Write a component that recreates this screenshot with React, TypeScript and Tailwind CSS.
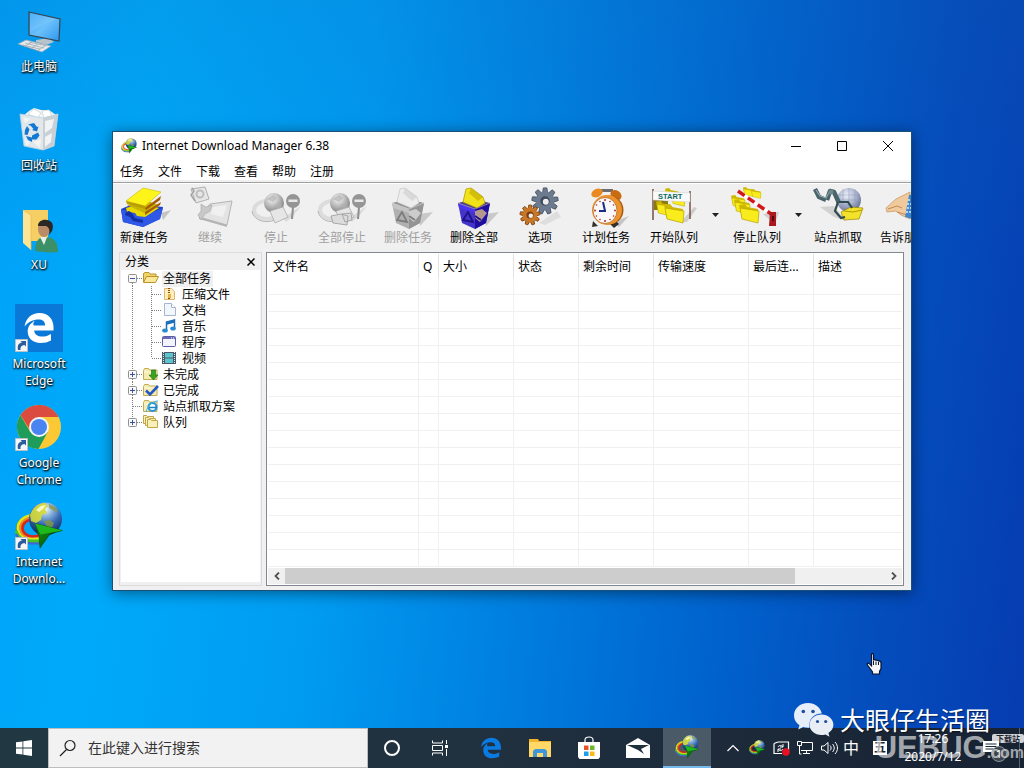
import React from "react";
import { clsx } from "clsx";

const FONT = "font-['Noto_Sans','Noto_Sans_CJK_SC',sans-serif]";

type IconProps = { className?: string };

/* ---------- logos ---------- */

function IdmLogo({ className }: IconProps) {
  return (
    <svg viewBox="0 0 48 48" className={className} aria-hidden="true">
      <defs>
        <radialGradient id="idm-globe" cx="0.5" cy="0.2" r="0.85">
          <stop offset="0" stopColor="#f4f8fb" />
          <stop offset="0.25" stopColor="#8db4dc" />
          <stop offset="0.55" stopColor="#3468b4" />
          <stop offset="1" stopColor="#0a1c48" />
        </radialGradient>
        <linearGradient id="idm-arrow" x1="0" y1="0" x2="1" y2="1">
          <stop offset="0" stopColor="#12a015" />
          <stop offset="1" stopColor="#033f06" />
        </linearGradient>
      </defs>
      <g fill="none">
        <ellipse cx="18" cy="27" rx="16.500" ry="14" stroke="#3f9f2e" strokeWidth="1.500" />
        <ellipse cx="18" cy="26" rx="15" ry="12.500" stroke="#e4e21c" strokeWidth="2.800" />
        <ellipse cx="18" cy="26" rx="12.500" ry="10.500" stroke="#f08a1c" strokeWidth="2.400" />
        <ellipse cx="18" cy="26" rx="10.500" ry="8.500" stroke="#dd2418" strokeWidth="2.600" />
        <path d="M2 30c2 5 7 7 14 7h9" stroke="#e8e31e" strokeWidth="2.500" />
        <path d="M1 29c2 7 8 10 15 10h10" stroke="#45c32a" strokeWidth="3" />
        <path d="M1 32c3 7 9 9.500 16 9.500h8" stroke="#4263dd" strokeWidth="2.200" />
      </g>
      <circle cx="30.500" cy="17" r="16.500" fill="url(#idm-globe)" />
      <path d="M15 13c3-8 9-12 15-12l3 3-3 3 2 4-5 2-1 5-5 3-5-2z" fill="#d6d936" opacity="0.9" />
      <path d="M34 2l6 3 3 5-4-1-5-3zM29 19l6-1 4 3-2 5-5-1z" fill="#8a9a3c" opacity="0.75" />
      <path d="M21 8l5-4 5-1-3 4-4 3z" fill="#fbfbd0" opacity="0.9" />
      <path d="M20 21.500L47.500 28.500 35 32 25 46 24 34z" fill="url(#idm-arrow)" stroke="#044a06" strokeWidth="0.6" />
      <path d="M20 21.500l27.500 7-22 4z" fill="#1fb81c" />
    </svg>
  );
}

function ThisPc() {
  return (
    <svg viewBox="0 0 48 48" className="size-12" aria-hidden="true">
      <defs>
        <linearGradient id="pc-screen" x1="0" y1="0" x2="1" y2="1">
          <stop offset="0" stopColor="#2c9cf0" />
          <stop offset="0.5" stopColor="#6cc0fb" />
          <stop offset="1" stopColor="#2b97ee" />
        </linearGradient>
      </defs>
      <path d="M21 33l13-2 5 4-8 3-10-3z" fill="#b7c3cb" />
      <path d="M14 5l31 7-1 22-30-6z" fill="url(#pc-screen)" stroke="#37454f" strokeWidth="1.2" />
      <path d="M15 6l25 6-25 13z" fill="#8dd0ff" opacity="0.35" />
      <path d="M3 37l8-4 25 6-9 6z" fill="#e6e9eb" stroke="#9aa5ad" strokeWidth="0.7" />
      <path d="M7 38l18 4M10 36l19 5M14 35l18 4M9 40l8-5M15 42l8-5M22 44l8-5" stroke="#9fabb3" strokeWidth="0.8" />
    </svg>
  );
}

function RecycleBin() {
  return (
    <svg viewBox="0 0 48 48" className="size-12" aria-hidden="true">
      <path d="M8 10l6-5 5-3 7 2 8 0 7 5-4 5H12z" fill="#f3f5f6" />
      <path d="M13 8l6-5 7 4-3 5zM27 5l7-1 3 6-8 2z" fill="#fff" stroke="#c5cdd2" strokeWidth="0.7" />
      <path d="M5 8l23 4 15-4-4 32-11 4-19-4z" fill="#e2e7ea" stroke="#b9d3e6" strokeWidth="0.8" />
      <path d="M28 12l15-4-4 32-11 4z" fill="#c9d0d5" />
      <path d="M30 15l9-2-2 9-7 5zM30 31l7-4-1 9-6 5zM9 33l6 3-3 4zM18 36l8-3-1 9zM8 11l8 2-6 4z" fill="#f1f3f5" />
      <g fill="#1279d3">
        <path d="M13 18.500l6-1.500 3 4 1.500-.5-1.500 5-5-1.500 1.500-1L16 20z" />
        <path d="M12 20l2.500 3.500-2 5.500-3-.5L10 24z" />
        <path d="M11 30l6 1.500v-2l6-3 1.500 3-3 4h-4.500v2.500l-4-2z" />
      </g>
    </svg>
  );
}

function UserFolder() {
  return (
    <svg viewBox="0 0 48 48" className="size-12" aria-hidden="true">
      <path d="M8 5h25v31H8z" fill="#f5cf63" />
      <path d="M8 5l8 5v35l-8-7z" fill="#ffe493" />
      <path d="M8 5l8 5v35" fill="none" stroke="#e7b94c" strokeWidth="0.7" />
      <path d="M20 46c0-8 3-14 9-14s14 1 14 15c-7 1-17 0-23-1z" fill="#3c9068" />
      <path d="M25 32l4 8 3-8z" fill="#e9efe9" />
      <ellipse cx="29" cy="24" rx="6" ry="8" fill="#b98b67" />
      <path d="M23 21c0-5 5-7 9-6 6 1 7 6 5 11l-3 4c1-5 0-8-3-9z" fill="#2b2725" />
    </svg>
  );
}

function EdgeMark({ className }: IconProps) {
  return (
    <svg viewBox="0 0 32 32" className={className} aria-hidden="true">
      <path
        fill="currentColor"
        d="M1.500 14.500C3 6 8.600 1 16.500 1 25 1 30.500 7 30.500 15v3.600H11.200c.3 4 3.600 6 8 6 3.300 0 6-.9 8.800-2.600v6.500c-3 1.700-6.500 2.500-10.300 2.500C9.600 31 4.700 26 4.700 19.500c0-4.700 2.600-8.500 7-10.600-1.300 1.500-1.900 3-.9 4.600h11.300c0-3.700-2-6-6.300-6-5.600 0-10.700 2.500-14.300 7z"
      />
    </svg>
  );
}

function EdgeTile() {
  return (
    <span className="flex size-12 items-center justify-center bg-[#0a78d7] text-white">
      <EdgeMark className="size-8" />
    </span>
  );
}

function ChromeLogo() {
  return (
    <svg viewBox="0 0 48 48" className="size-12" aria-hidden="true">
      <circle cx="24" cy="24" r="22" fill="#fcc934" />
      <path d="M5.500 12.200A22 22 0 0 0 23.500 46l9.200-17L24 24l-8.700 5z" fill="#1d9c5a" />
      <path d="M5.500 12A22 22 0 0 1 43.500 14H24l-9 13z" fill="#db4b3f" />
      <circle cx="24" cy="24" r="10" fill="#f4f5f5" />
      <circle cx="24" cy="24" r="8" fill="#4a84f0" />
    </svg>
  );
}

function ShortcutBadge() {
  return (
    <svg viewBox="0 0 13 13" className="absolute bottom-0 left-0 size-[13px]" aria-hidden="true">
      <path d="M0.500 0.500h12v12h-12z" fill="#f4f6f8" stroke="#b9c1c8" />
      <path d="M3 11c-1-5 1-7 4-7.500L5.500 2H11v5.500L9.500 6C6.500 6.500 5 8 5.500 11z" fill="#2d5c9e" />
    </svg>
  );
}

/* ---------- desktop ---------- */

const shortcuts: { lines: string[]; icon: React.ReactNode; link?: boolean }[] = [
  { lines: ["此电脑"], icon: <ThisPc /> },
  { lines: ["回收站"], icon: <RecycleBin /> },
  { lines: ["XU"], icon: <UserFolder /> },
  { lines: ["Microsoft", "Edge"], icon: <EdgeTile />, link: true },
  { lines: ["Google", "Chrome"], icon: <ChromeLogo />, link: true },
  { lines: ["Internet", "Downlo..."], icon: <IdmLogo className="size-12" />, link: true },
];

function DesktopIcons() {
  return (
    <div className="flex w-[78px] flex-col pt-[7px]">
      {shortcuts.map((s) => (
        <button key={s.lines[0]} type="button" className="flex h-[99px] flex-col items-center">
          <span className="relative block">
            {s.icon}
            {s.link && <ShortcutBadge />}
          </span>
          <span className="mt-[3px] text-center text-xs leading-[17px] text-white [text-shadow:0_1px_2px_#000,1px_1px_2px_#000]">
            {s.lines.map((l) => (
              <span key={l} className="block">
                {l}
              </span>
            ))}
          </span>
        </button>
      ))}
    </div>
  );
}

/* ---------- toolbar icons ---------- */

function AddIcon() {
  return (
    <svg viewBox="0 0 54 44" className="h-11 w-[54px]" aria-hidden="true">
      <path d="M44 27l10-3-8 10z" fill="#c4c4c4" />
      <path d="M4 23l12-5 30 3-3 12-17 8-20-5z" fill="#1f3fc8" />
      <path d="M4 23l22 7 20-8-3 11-17 8-20-5z" fill="#2f58e6" />
      <path d="M9 22l17-5 16 5-14 9-8-1-2-3-8-1z" fill="#e8d800" />
      <path d="M10 19l18-5 14 5-15 8z" fill="#c9b500" />
      <path d="M28 26l16-10-1 3-15 10zM28 22l16-12-1 4-14 10z" fill="#a55a08" />
      <path d="M9 15L26 2l18 4-16 14z" fill="#fdf51a" stroke="#c7b800" strokeWidth="0.6" />
      <path d="M9 15l19 5v3L10 18z" fill="#b99d05" />
      <path d="M9 26l3-1 3 2 3 5 8 2v3l-10-2-3-4-5-2z" fill="#1531a8" />
    </svg>
  );
}

function ResumeIcon() {
  return (
    <svg viewBox="0 0 54 44" className="h-11 w-[54px]" aria-hidden="true">
      <path d="M8 3l14-2 4 12-13 4z" fill="#e6e6e6" stroke="#b0b0b0" />
      <circle cx="17" cy="8" r="3.500" fill="none" stroke="#bdbdbd" strokeWidth="2" />
      <path d="M9 2l2 3-3 4 4 6" fill="none" stroke="#a4a4a4" strokeWidth="1.500" />
      <path d="M27 18l22-3-5 24-28-8z" fill="#e3e3e3" stroke="#b5b5b5" />
      <path d="M16 31l28 8v2l-28-8z" fill="#b4b4b4" />
      <path d="M18 18l5 3 6-2-2 6-5 3-4 6-3-5 3-4z" fill="#c8c8c8" stroke="#a6a6a6" strokeWidth="0.6" />
      <path d="M30 21l14-2-4 12-12-3z" fill="#f0f0f0" />
    </svg>
  );
}

function StopIcon({ many }: { many?: boolean }) {
  return (
    <svg viewBox="0 0 54 44" className="h-11 w-[54px]" aria-hidden="true">
      <defs>
        <radialGradient id="stop-globe" cx="0.4" cy="0.3" r="0.7">
          <stop offset="0" stopColor="#f6f6f6" />
          <stop offset="0.5" stopColor="#bdbdbd" />
          <stop offset="1" stopColor="#808080" />
        </radialGradient>
      </defs>
      <path d="M34 32l18-12-8 10-7 6z" fill="#dadada" />
      <ellipse cx="18" cy="24" rx="13" ry="9" fill="none" stroke="#dcdcdc" strokeWidth="4" />
      <path d="M3 25c2 11 16 13 25 8" fill="none" stroke="#b2b2b2" strokeWidth="1" />
      <circle cx="25" cy="17" r="10" fill="url(#stop-globe)" />
      <path d="M18 13l6-4 4 3-4 4zM26 19l6-3 1 5-5 3z" fill="#b0b0b0" opacity="0.7" />
      <path d="M21 25l13-4 5 10-13 6z" fill="#e6e6e6" stroke="#a9a9a9" strokeWidth="0.8" />
      {many && <path d="M16 30l10-2 7 2-1 9-14-2zM27 28l9-1 1 7-7 2z" fill="#dcdcdc" stroke="#999" strokeWidth="0.8" />}
      <path d="M43 21h2l-1 12h-2z" fill="#8e8e8e" />
      <circle cx="44" cy="15" r="7" fill="#959595" />
      <path d="M39.500 13.500h9v2.500h-9z" fill="#e8e8e8" />
    </svg>
  );
}

function BinIcon({ full }: { full?: boolean }) {
  const c = full
    ? { paper: "#f1e21a", shade: "#b9a000", a: "#4534c8", b: "#1f0fa0", c: "#4a35f0", mark: "#d9b98a", dark: "#1c1186" }
    : { paper: "#ededed", shade: "#c9c9c9", a: "#b0b0b0", b: "#949494", c: "#c4c4c4", mark: "#d9d9d9", dark: "#7c7c7c" };
  return (
    <svg viewBox="0 0 54 44" className="h-11 w-[54px]" aria-hidden="true">
      <path d="M38 28l14-2-13 14z" fill="#c9c9c9" />
      <path d="M11 17l16-4 16 4-15 7z" fill={c.dark} opacity="0.8" />
      <path d="M19 3l5-1 12 9 2 6-8 5-14-6z" fill={c.paper} stroke={c.shade} strokeWidth="0.8" />
      <path d="M24 2l12 9-5 4-9-8z" fill={c.shade} opacity="0.55" />
      <path d="M11 17l17 6 15-6-4 20-11 6-13-6z" fill={c.a} />
      <path d="M28 23l15-6-4 20-11 6z" fill={c.b} />
      <path d="M11 17l17 6v4l-16-5z" fill={c.c} />
      <path d="M28 25l7-2 5 4-7 9-5-4z" fill={c.mark} opacity="0.8" />
      <path d="M21 26l-5 8 10 2zM28 30l6 4" fill="none" stroke={c.dark} strokeWidth="1.800" />
      <path d="M11 17l17 6 15-6" fill="none" stroke={c.mark} strokeWidth="0.7" opacity="0.8" />
    </svg>
  );
}

function Gear({ cx, cy, r, fill, edge }: { cx: number; cy: number; r: number; fill: string; edge: string }) {
  return (
    <g transform={`translate(${cx} ${cy})`}>
      {[0, 40, 80, 120, 160, 200, 240, 280, 320].map((a) => (
        <path
          key={a}
          transform={`rotate(${a})`}
          d={`M${-r * 0.24} ${-r * 0.7}L${-r * 0.16} ${-r * 1.25}H${r * 0.18}L${r * 0.26} ${-r * 0.7}z`}
          fill={fill}
          stroke={edge}
          strokeWidth="0.8"
        />
      ))}
      <circle r={r * 0.9} fill={fill} />
      <circle r={r * 0.45} fill={edge} />
      <circle cx="0.8" cy="0.8" r={r * 0.28} fill="#eee" />
    </g>
  );
}

function OptionsIcon() {
  return (
    <svg viewBox="0 0 54 44" className="h-11 w-[54px]" aria-hidden="true">
      <path d="M26 37l18-12 4 6-16 8z" fill="#dedede" />
      <Gear cx={32} cy={15} r={10.5} fill="#6c7b8f" edge="#3f4c5c" />
      <Gear cx={17} cy={29} r={8} fill="#c97828" edge="#7a3d0c" />
    </svg>
  );
}

function SchedulerIcon() {
  return (
    <svg viewBox="0 0 54 44" className="h-11 w-[54px]" aria-hidden="true">
      <path d="M34 36l16-6-10 11z" fill="#c6c6c6" />
      <path d="M14 35l5 5-6 1zM36 34l4 4-5 4-4-4z" fill="#33302c" />
      <path d="M20 3h14v3H20z" fill="#6d6d70" />
      <ellipse cx="18" cy="7" rx="6" ry="4" fill="#e98a20" transform="rotate(-25 18 7)" />
      <ellipse cx="37" cy="9" rx="6" ry="4.500" fill="#c96b12" transform="rotate(35 37 9)" />
      <circle cx="30" cy="24" r="14.500" fill="#a8570f" />
      <circle cx="28" cy="24" r="15" fill="#ec932d" />
      <ellipse cx="26" cy="24.500" rx="12" ry="13" fill="#f8f8fb" stroke="#b76a1c" strokeWidth="0.8" />
      <g fill="#b03020">
        <circle cx="26" cy="14" r="1" />
        <circle cx="26" cy="35" r="1" />
        <circle cx="16" cy="24.500" r="1" />
        <circle cx="36" cy="24.500" r="1" />
        <circle cx="31" cy="15.500" r="0.800" />
        <circle cx="34.500" cy="19" r="0.800" />
        <circle cx="34.500" cy="30" r="0.800" />
        <circle cx="31" cy="33.500" r="0.800" />
        <circle cx="21" cy="33.500" r="0.800" />
        <circle cx="17.500" cy="30" r="0.800" />
        <circle cx="17.500" cy="19" r="0.800" />
        <circle cx="21" cy="15.500" r="0.800" />
      </g>
      <path d="M26 25l-2-9M27 25h-7" stroke="#1d2b86" strokeWidth="2" />
    </svg>
  );
}

function FolderShape({ x, y, s = 1 }: { x: number; y: number; s?: number }) {
  return (
    <g transform={`translate(${x} ${y}) scale(${s})`}>
      <path d="M0 1l6-1 2 3 11 2v12L3 14z" fill="#cfb800" />
      <path d="M1 4l19 3-1 12-16-4z" fill="#f8ec1c" stroke="#b7a000" strokeWidth="0.7" />
    </g>
  );
}

function StartQueueIcon() {
  return (
    <svg viewBox="0 0 54 44" className="h-11 w-[54px]" aria-hidden="true">
      <path d="M34 36l13-15 3 1-10 14z" fill="#cdcdcd" />
      <FolderShape x={18} y={2} s={0.7} />
      <FolderShape x={24} y={7} s={0.7} />
      <path d="M7 13l14 2v9H7z" fill="#8a7a10" />
      <FolderShape x={9} y={15} s={0.8} />
      <FolderShape x={17} y={18} />
      <path d="M6 3v31M43 5v28" stroke="#7e5b4e" strokeWidth="1.600" />
      <path d="M6 5l37 2v9L6 14z" fill="#fafafa" stroke="#ccc" strokeWidth="0.5" />
      <text x="11" y="12.500" fontSize="7.500" fontWeight="700" fontFamily="Liberation Sans" fill="#0f6a62">
        START
      </text>
    </svg>
  );
}

function StopQueueIcon() {
  return (
    <svg viewBox="0 0 54 44" className="h-11 w-[54px]" aria-hidden="true">
      <path d="M33 28l16-2-4 12z" fill="#cecece" />
      <FolderShape x={13} y={1} s={0.5} />
      <FolderShape x={21} y={3} s={0.5} />
      <FolderShape x={1} y={9} s={0.7} />
      <FolderShape x={4} y={13} s={0.8} />
      <FolderShape x={9} y={18} s={1} />
      <path d="M8 5L44 30" stroke="#fff" strokeWidth="3.500" />
      <path d="M8 5L44 30" stroke="#d3151c" strokeWidth="3.500" strokeDasharray="8 4" />
      <path d="M40 26h6v14h-7z" fill="#a9191d" />
      <path d="M42 30h2v5h-2z" fill="#58090b" />
    </svg>
  );
}

function GrabberIcon() {
  return (
    <svg viewBox="0 0 54 44" className="h-11 w-[54px]" aria-hidden="true">
      <defs>
        <radialGradient id="grab-ball" cx="0.4" cy="0.3" r="0.7">
          <stop offset="0" stopColor="#eef1f8" />
          <stop offset="0.6" stopColor="#a5afcb" />
          <stop offset="1" stopColor="#666f8f" />
        </radialGradient>
      </defs>
      <path d="M9 21l14-1 12 15-12-4z" fill="#d2d2d2" />
      <circle cx="38" cy="14" r="12" fill="url(#grab-ball)" />
      <path d="M27 9h22M26 14h24M27 19h22M32 3v22M38 2v24M44 3v22" stroke="#8f9abc" strokeWidth="0.5" />
      <path d="M30 26l10-5 12 1-4 11-15 1z" fill="#f3e22a" stroke="#9c8500" strokeWidth="0.7" />
      <path d="M33 25l9 1 9-2" fill="none" stroke="#b39a00" />
      <path d="M4 3l4 8 7 3M16 14l3-9 4 1 5 11" fill="none" stroke="#49636b" strokeWidth="4.500" strokeLinejoin="round" />
      <path d="M5 4l4 6 6 2 4-7" fill="none" stroke="#8ba4a8" strokeWidth="1.200" />
      <path d="M27 16l-3 9 6 7 4-1M28 16l9 0 4 6" fill="none" stroke="#304a50" strokeWidth="2.200" />
      <circle cx="20" cy="6" r="2.500" fill="#6d878d" />
    </svg>
  );
}

function TellFriendIcon() {
  return (
    <svg viewBox="0 0 54 44" className="h-11 w-[54px]" aria-hidden="true">
      <path d="M9 22l10-9 14-7v27l-9-4-5-4-9 1z" fill="#f0c99c" stroke="#c99a68" strokeWidth="0.8" />
      <path d="M11 23l9-3 5 2M20 26l10 3" fill="none" stroke="#c08a54" />
      <path d="M32 9l14-2-3 28-15-4z" fill="#3d86d2" />
      <path d="M31 14h10M30 18h10M30 22h10M29 26h10" stroke="#d3eafc" strokeWidth="1.500" strokeDasharray="2 1" />
    </svg>
  );
}

interface Tool {
  label: string;
  icon: React.ReactNode;
  disabled?: boolean;
  split?: boolean;
}

const tools: Tool[] = [
  { label: "新建任务", icon: <AddIcon /> },
  { label: "继续", icon: <ResumeIcon />, disabled: true },
  { label: "停止", icon: <StopIcon />, disabled: true },
  { label: "全部停止", icon: <StopIcon many />, disabled: true },
  { label: "删除任务", icon: <BinIcon />, disabled: true },
  { label: "删除全部", icon: <BinIcon full /> },
  { label: "选项", icon: <OptionsIcon /> },
  { label: "计划任务", icon: <SchedulerIcon /> },
  { label: "开始队列", icon: <StartQueueIcon />, split: true },
  { label: "停止队列", icon: <StopQueueIcon />, split: true },
  { label: "站点抓取", icon: <GrabberIcon /> },
  { label: "告诉朋友", icon: <TellFriendIcon /> },
];

function Toolbar() {
  return (
    <div className="flex h-[68px] overflow-hidden pt-0.5">
      {tools.map((t) => (
        <div key={t.label} className={clsx("flex shrink-0 items-start", !t.split && "mr-1")}>
          <button
            type="button"
            disabled={t.disabled}
            className={clsx(
              "flex flex-col items-center text-xs leading-4 whitespace-nowrap",
              t.split ? "w-[66px]" : "w-[62px]",
              t.disabled ? "text-[#a0a0a0]" : "text-black",
            )}
          >
            {t.icon}
            {t.label}
          </button>
          {t.split && (
            <button type="button" aria-label={t.label + "菜单"} className="flex h-[58px] w-[17px] items-center justify-center">
              <svg viewBox="0 0 7 4" className="h-1 w-[7px]">
                <path d="M0 0h7L3.500 4z" fill="#222" />
              </svg>
            </button>
          )}
        </div>
      ))}
    </div>
  );
}

/* ---------- category tree ---------- */

function FolderBase({ children }: { children?: React.ReactNode }) {
  return (
    <svg viewBox="0 0 17 16" className="h-4 w-[17px]" aria-hidden="true">
      <path d="M1.500 4.500l1-2h4l1 1.500h7.500v9.500H1.500z" fill="#f6ebb0" stroke="#c4ab50" />
      <path d="M2 6h12.500" stroke="#fffbe0" />
      {children}
    </svg>
  );
}

const treeIcons: Record<string, React.ReactNode> = {
  open: (
    <svg viewBox="0 0 17 16" className="h-4 w-[17px]" aria-hidden="true">
      <path d="M1.500 12V3.500l1.500-1h4l1 1.500h6V7" fill="#f2d367" stroke="#b8942f" />
      <path d="M1.500 12.500l3-6h12l-3 6z" fill="#fbe796" stroke="#b8942f" />
    </svg>
  ),
  zip: (
    <svg viewBox="0 0 17 16" className="h-4 w-[17px]" aria-hidden="true">
      <path d="M3.500 2.500h7l3 3v8h-10z" fill="#fdeebb" stroke="#e0b673" />
      <path d="M8 2v12" stroke="#8c4a10" strokeWidth="2" strokeDasharray="1 1" />
      <path d="M7 8h3v4H7z" fill="#e8b040" />
    </svg>
  ),
  doc: (
    <svg viewBox="0 0 17 16" className="h-4 w-[17px]" aria-hidden="true">
      <path d="M3.500 1.500h7l4 4v8h-11z" fill="#f1f5fc" stroke="#a9b5cf" />
      <path d="M10.500 1.500v4h4" fill="#fff" stroke="#a9b5cf" />
    </svg>
  ),
  music: (
    <svg viewBox="0 0 17 16" className="h-4 w-[17px]" aria-hidden="true">
      <path d="M5.500 12V4l8-2v8" fill="none" stroke="#1d70b8" strokeWidth="1.500" />
      <path d="M5 4l9-2.500v3L5 7z" fill="#1d70b8" />
      <ellipse cx="4" cy="12.500" rx="2.800" ry="2" fill="#2a8ad0" />
      <ellipse cx="12" cy="10.500" rx="2.800" ry="2" fill="#2a8ad0" />
    </svg>
  ),
  program: (
    <svg viewBox="0 0 17 16" className="h-4 w-[17px]" aria-hidden="true">
      <rect x="1.500" y="2.500" width="13" height="10" rx="1" fill="#f3f3fc" stroke="#5c5ca8" />
      <path d="M2 3h12v2H2z" fill="#6a6abb" />
      <path d="M10 4h1M12 4h1" stroke="#fff" />
    </svg>
  ),
  video: (
    <svg viewBox="0 0 17 16" className="h-4 w-[17px]" aria-hidden="true">
      <path d="M1 2h14v12H1z" fill="#4a586a" />
      <path d="M4 3h8v4.500H4zM4 8.500h8V13H4z" fill="#5cc4cc" />
      <path d="M2.500 2v12M13.500 2v12" stroke="#dfe6ea" strokeDasharray="1 1" />
    </svg>
  ),
  pending: (
    <FolderBase>
      <path d="M9.500 4h4v5h2.500L11.500 14 7 9h2.500z" fill="#36a51f" stroke="#1b6d0e" strokeWidth="0.6" />
    </FolderBase>
  ),
  done: (
    <FolderBase>
      <path d="M4 8.500l4 4L16 4" fill="none" stroke="#2457c5" strokeWidth="2.600" />
    </FolderBase>
  ),
  site: (
    <FolderBase>
      <circle cx="10.500" cy="9" r="4" fill="#fff" stroke="#2797d8" strokeWidth="2.200" />
      <path d="M7 9.500h8" stroke="#1d83c6" strokeWidth="1.500" />
      <path d="M4 14C6 7 11 3 16 3" fill="none" stroke="#49b2e6" />
    </FolderBase>
  ),
  queue: (
    <svg viewBox="0 0 17 16" className="h-4 w-[17px]" aria-hidden="true">
      <g fill="#f8f0b8" stroke="#c0a84a">
        <path d="M1.500 9.500v-8h3l1 1h6v7z" />
        <path d="M3.500 11.500v-8h3l1 1h6v7z" />
        <path d="M5.500 13.500v-8h3l1 1h6v7z" />
      </g>
    </svg>
  ),
};

/* dotted connector, 19px wide so the line sits in the middle of its level */
function Guide({ d }: { d: string }) {
  return (
    <svg viewBox="0 0 19 16" className="h-4 w-[19px]" aria-hidden="true">
      <path d={d} fill="none" stroke="#808080" strokeDasharray="1 1" />
    </svg>
  );
}

function Expander({ open, first, last }: { open?: boolean; first?: boolean; last?: boolean }) {
  return (
    <button type="button" aria-label={open ? "折叠" : "展开"} className="h-4 w-[19px]">
      <svg viewBox="0 0 19 16" className="h-4 w-[19px]">
        <path
          d={clsx("M14 8.500h5", !first && "M9.500 0v4", !last && "M9.500 13v3")}
          fill="none"
          stroke="#808080"
          strokeDasharray="1 1"
        />
        <rect x="5.500" y="4.500" width="8" height="8" rx="1" fill="#f8f8f8" stroke="#919191" />
        <path d={clsx("M7 8.500h5", !open && "M9.500 6v5")} stroke="#3b53a4" />
      </svg>
    </button>
  );
}

const tree = [
  { label: "全部任务", icon: "open", expander: "open" },
  { label: "压缩文件", icon: "zip", level: 1 },
  { label: "文档", icon: "doc", level: 1 },
  { label: "音乐", icon: "music", level: 1 },
  { label: "程序", icon: "program", level: 1 },
  { label: "视频", icon: "video", level: 1, end: true },
  { label: "未完成", icon: "pending", expander: "closed" },
  { label: "已完成", icon: "done", expander: "closed" },
  { label: "站点抓取方案", icon: "site" },
  { label: "队列", icon: "queue", expander: "closed", end: true },
];

function CategoryPanel() {
  return (
    <aside className="flex w-[143px] shrink-0 flex-col border border-[#dcdcdc] px-px pb-[3px]">
      <div className="flex h-[17px] items-center justify-between pr-[5px] pl-1">
        <h2 className="mt-px text-xs leading-4">分类</h2>
        <button type="button" aria-label="关闭分类">
          <svg viewBox="0 0 8 8" className="size-2">
            <path d="M0.500 0.500l7 7M7.500 0.500l-7 7" stroke="#000" strokeWidth="1.500" />
          </svg>
        </button>
      </div>
      <ul className="flex-1 bg-white pl-0.5">
        {tree.map((n, i) => (
          <li key={n.label} className="flex h-4 items-center">
            {n.expander && <Expander open={n.expander === "open"} first={i === 0} last={n.end} />}
            {!n.expander && <Guide d={n.level ? "M9.500 0v16" : "M9.500 0v16M10 8.500h9"} />}
            {n.level && <Guide d={n.end ? "M9.500 0v8M10 8.500h9" : "M9.500 0v16M10 8.500h9"} />}
            {treeIcons[n.icon]}
            <span
              className={clsx("mt-0.5 ml-[3px] px-px text-xs leading-4 whitespace-nowrap", i === 0 && "bg-[#f0f0f0] pr-0.5")}
            >
              {n.label}
            </span>
          </li>
        ))}
      </ul>
    </aside>
  );
}

/* ---------- download list ---------- */

const columns = [
  { label: "文件名", width: "w-[151px]" },
  { label: "Q", width: "w-5" },
  { label: "大小", width: "w-[75px]" },
  { label: "状态", width: "w-[65px]" },
  { label: "剩余时间", width: "w-[75px]" },
  { label: "传输速度", width: "w-[95px]" },
  { label: "最后连...", width: "w-[65px]" },
  { label: "描述", width: "" },
];

const EMPTY_ROWS = 17;

function DownloadList() {
  return (
    <section className="min-w-0 flex-1 border border-[#828790] bg-white p-px">
      <table className="w-full table-fixed border-separate border-spacing-0">
        <thead>
          <tr className="h-6">
            {columns.map((c, i) => (
              <th
                key={c.label}
                className={clsx(
                  "p-0 pt-0.5 text-left text-xs leading-4 font-normal whitespace-nowrap",
                  c.width,
                  i === 0 ? "pl-[5px]" : "pl-1",
                  i < columns.length - 1 && "border-r border-[#e2e2e2]",
                )}
              >
                {c.label}
              </th>
            ))}
          </tr>
        </thead>
        <tbody>
          {Array.from({ length: EMPTY_ROWS }, (_, r) => (
            <tr key={r} className="h-[17px]">
              {columns.map((c, i) => (
                <td
                  key={c.label}
                  className={clsx("border-b border-[#f0f0f0] p-0", i < columns.length - 1 && "border-r")}
                />
              ))}
            </tr>
          ))}
        </tbody>
      </table>
      <div className="mt-px flex h-4 bg-[#f0f0f0]">
        <button type="button" aria-label="向左滚动" className="flex w-[17px] items-center justify-center">
          <svg viewBox="0 0 6 8" className="h-2 w-1.5">
            <path d="M5 0.500L1.500 4 5 7.500" fill="none" stroke="#505050" strokeWidth="1.800" />
          </svg>
        </button>
        <div className="flex-1">
          <div className="h-full w-[85%] bg-[#cdcdcd]" />
        </div>
        <button type="button" aria-label="向右滚动" className="flex w-[17px] items-center justify-center">
          <svg viewBox="0 0 6 8" className="h-2 w-1.5">
            <path d="M1 0.500L4.500 4 1 7.500" fill="none" stroke="#505050" strokeWidth="1.800" />
          </svg>
        </button>
      </div>
    </section>
  );
}

/* ---------- window ---------- */

const menus = ["任务", "文件", "下载", "查看", "帮助", "注册"];

function IdmWindow() {
  return (
    <main className="absolute inset-x-28 top-[131px] overflow-hidden border border-[#17507a] bg-[#f0f0f0] text-black shadow-[0_2px_14px_rgba(0,0,0,0.45)]">
      <header className="flex h-[29px] items-center bg-white pb-px pl-2">
        <IdmLogo className="size-4" />
        <h1 className="ml-[5px] flex-1 text-xs leading-5">Internet Download Manager 6.38</h1>
        <button type="button" aria-label="最小化" className="flex h-full w-[46px] items-center justify-center">
          <svg viewBox="0 0 10 10" className="size-2.5">
            <path d="M0 5.500h10" stroke="#000" />
          </svg>
        </button>
        <button type="button" aria-label="最大化" className="flex h-full w-[46px] items-center justify-center">
          <svg viewBox="0 0 10 10" className="size-2.5">
            <path d="M0.500 0.500h9v9h-9z" fill="none" stroke="#000" />
          </svg>
        </button>
        <button type="button" aria-label="关闭" className="flex h-full w-[46px] items-center justify-center">
          <svg viewBox="0 0 10 10" className="size-2.5">
            <path d="M0 0l10 10M10 0L0 10" stroke="#000" />
          </svg>
        </button>
      </header>
      <nav className="flex h-[19px] items-center bg-white pt-0.5">
        {menus.map((m) => (
          <button key={m} type="button" className="px-[7px] text-xs leading-4">
            {m}
          </button>
        ))}
      </nav>
      <div className="mt-0.5 border-t border-[#a0a0a0]">
        <div className="border-t border-white">
          <Toolbar />
        </div>
      </div>
      <div className="flex gap-1 pr-[7px] pb-1 pl-1.5">
        <CategoryPanel />
        <DownloadList />
      </div>
    </main>
  );
}

/* ---------- taskbar ---------- */

function PinnedApps() {
  return (
    <>
      <button type="button" aria-label="Cortana" className="flex w-12 shrink-0 items-center justify-center">
        <span className="size-4 rounded-full border-2 border-white" />
      </button>
      <button type="button" aria-label="任务视图" className="flex w-12 shrink-0 items-center justify-center">
        <svg viewBox="0 0 16 16" className="size-4" fill="none" stroke="#fff">
          <path d="M0.500 0.500v2.500h10V0.500M0.500 15.500V13h10v2.500M0.500 5.500h10v5H0.500zM14.500 0v4M14.500 9v7" />
          <path d="M13 5h3v3h-3z" fill="#fff" stroke="none" />
        </svg>
      </button>
      <div className="ml-[3px] flex shrink-0 gap-px">
        <button type="button" aria-label="Edge" className="flex w-12 items-center justify-center text-[#0a7be0]">
          <EdgeMark className="size-[22px]" />
        </button>
        <button type="button" aria-label="文件资源管理器" className="flex w-12 items-center justify-center">
          <svg viewBox="0 0 22 18" className="h-[18px] w-[22px]">
            <path d="M0 0h9l1 2h12v16H0z" fill="#f0b52c" />
            <path d="M0 3h22v15H0z" fill="#ffd868" />
            <path d="M4 18v-6l2-2h10l2 2v6h-4v-4H8v4z" fill="#3f96dc" />
          </svg>
        </button>
        <button type="button" aria-label="应用商店" className="flex w-12 items-center justify-center">
          <svg viewBox="0 0 24 24" className="size-6">
            <path d="M8 7V4c0-2 1.500-3 4-3s4 1 4 3v3" fill="none" stroke="#fff" strokeWidth="1.200" />
            <path d="M1 6h22v15l-1.500 2h-19L1 21z" fill="#fff" />
            <path d="M7 9.500h4.500V14H7z" fill="#e8502a" />
            <path d="M13 9.500h4.500V14H13z" fill="#6cb52d" />
            <path d="M7 15.500h4.500V20H7z" fill="#1b9fe8" />
            <path d="M13 15.500h4.500V20H13z" fill="#fcb813" />
          </svg>
        </button>
        <button type="button" aria-label="邮件" className="flex w-12 items-center justify-center">
          <svg viewBox="0 0 24 20" className="h-5 w-6">
            <path d="M12 0l12 7v13H0V7z" fill="#fff" />
            <path d="M1 7h22l-8 4 3 5-6-4z" fill="#20313e" />
          </svg>
        </button>
        <button type="button" aria-label="IDM" className="flex w-12 items-center justify-center border-b-2 border-[#76b9ed] bg-[#4b5a67]">
          <IdmLogo className="size-6" />
        </button>
      </div>
    </>
  );
}

function Tray() {
  return (
    <div className="ml-auto flex shrink-0 items-center text-white">
      <button type="button" aria-label="显示隐藏的图标" className="flex w-6 justify-center">
        <svg viewBox="0 0 12 8" className="h-2 w-3">
          <path d="M0.500 7L6 1.500 11.500 7" fill="none" stroke="#fff" strokeWidth="1.200" />
        </svg>
      </button>
      <span className="flex w-6 justify-center">
        <IdmLogo className="size-4" />
      </span>
      <span className="flex w-6 justify-center">
        <svg viewBox="0 0 17 16" className="h-4 w-[17px]">
          <path d="M1 3.500l4-1.500h10.500v9M1 3.500v10h8" fill="none" stroke="#fff" strokeWidth="1.200" />
          <path d="M5 7c1-2 4-2 5 0M10 4v3H7M10 9c-1 2-4 2-5 0M5 12V9h3" fill="none" stroke="#fff" />
          <circle cx="13" cy="12" r="3.800" fill="#e81123" />
        </svg>
      </span>
      <span className="flex w-6 justify-center">
        <svg viewBox="0 0 16 14" className="h-3.5 w-4" fill="none" stroke="#fff">
          <path d="M5 1.500h10.500v8H4M6 12.500h7M9.500 10v3M0.500 0.500h4v4h-4zM2.500 5v8h2" />
        </svg>
      </span>
      <span className="flex w-6 justify-center">
        <svg viewBox="0 0 17 14" className="h-3.5 w-[17px]" fill="none" stroke="#fff">
          <path d="M0.500 5v4h2.500l4 3.500v-11L3 5zM9 4.500c1.500 1.500 1.500 3.500 0 5M11.500 3c2.300 2.300 2.300 5.700 0 8M14 1c3.300 3.500 3.300 8.500 0 12" />
        </svg>
      </span>
      <span className="w-5 text-center text-base leading-5">中</span>
      <span className="mr-2 ml-3 flex size-[14px] items-center justify-center bg-white text-xs leading-3 font-bold text-[#1b2430]">五</span>
      <time className="w-[76px] text-center text-xs leading-[18px]">
        <span className="block">17:26</span>
        <span className="block">2020/7/12</span>
      </time>
      <button type="button" aria-label="通知" className="relative mr-3.5 ml-1.5 flex w-7 justify-center">
        <svg viewBox="0 0 16 16" className="size-4">
          <path d="M0 1h16v11h-4v4l-4-4H0z" fill="#fff" />
          <path d="M2.500 4h11M2.500 6.500h11M2.500 9h8" stroke="#1b2735" />
        </svg>
        <span className="absolute top-1.5 left-3.5 flex size-4 items-center justify-center rounded-full border border-[#8b9299] bg-[#3c454e] text-[11px] leading-3">
          1
        </span>
      </button>
      <span className="h-10 w-[5px] border-l border-[#56626f]" />
    </div>
  );
}

function Taskbar() {
  return (
    <footer className="flex h-10 bg-gradient-to-r from-[#213842] via-[#20303f] to-[#172233]">
      <button type="button" aria-label="开始" className="flex w-12 shrink-0 items-center justify-center">
        <svg viewBox="0 0 16 16" className="size-4" fill="#fff">
          <path d="M0 2.300l6.500-.9v6.100H0zM7.300 1.300L16 0v7.500H7.300zM0 8.400h6.500v6.200L0 13.700zM7.300 8.400H16V16l-8.700-1.200z" />
        </svg>
      </button>
      <label className="flex w-80 items-center border border-[#bdbdbd] bg-[#f2f2f2] pl-2.5">
        <svg viewBox="0 0 18 18" className="size-[18px] shrink-0" fill="none" stroke="#222" strokeWidth="1.200">
          <circle cx="11" cy="6.500" r="5" />
          <path d="M7.500 10.500L1 17" />
        </svg>
        <input
          type="text"
          aria-label="搜索"
          placeholder="在此键入进行搜索"
          className="ml-[11px] min-w-0 flex-1 bg-transparent text-sm text-[#222] outline-none placeholder:text-[#333]"
        />
      </label>
      <PinnedApps />
      <Tray />
    </footer>
  );
}

/* ---------- overlays ---------- */

function WeChatMark() {
  return (
    <svg viewBox="0 0 40 34" className="h-[34px] w-10" aria-hidden="true">
      <path d="M14 0C6 0 0 5.500 0 12.500c0 4 2 7.500 5.500 9.800L4.200 26.500l5-2.500c1.500.5 3 .7 4.800.7h1.500C14 16.500 20 10.500 27.800 10.500 26.500 4.500 21 0 14 0z" fill="#e6eefa" />
      <path d="M27.500 11.500c-6.600 0-12 4.500-12 10.300s5.400 10.300 12 10.300c1.400 0 2.700-.2 4-.6l4 2.200-1.100-3.700c3.100-1.900 5-4.900 5-8.200 0-5.800-5.300-10.300-11.900-10.300z" fill="#e9eef6" />
      <g fill="#1d4e9f">
        <circle cx="9.300" cy="8.500" r="1.800" />
        <circle cx="19" cy="8.500" r="1.800" />
        <circle cx="23.500" cy="18.500" r="1.600" />
        <circle cx="31.700" cy="18.500" r="1.600" />
      </g>
    </svg>
  );
}

function Watermarks() {
  return (
    <>
      <div className="pointer-events-none absolute right-[34px] bottom-[31px] flex items-center gap-1.5 text-white">
        <WeChatMark />
        <span className="text-[25px] leading-8 whitespace-nowrap [text-shadow:1px_1px_1px_rgba(0,0,0,0.5)]">大眼仔生活圈</span>
      </div>
      <div className="pointer-events-none absolute right-0 bottom-0 flex h-10 items-center font-['Liberation_Sans',sans-serif] font-bold text-white/60">
        <span className="text-[31px] leading-10">UEBUG</span>
        <span className="flex flex-col items-end">
          <span className="rounded-xs bg-white/80 px-1 font-['Noto_Sans_CJK_SC',sans-serif] text-[8px] leading-[9px] text-[#1b2430]">
            下载站
          </span>
          <span className="text-base leading-5">.com</span>
        </span>
      </div>
    </>
  );
}

function HandCursor() {
  return (
    <svg viewBox="0 0 17 22" className="pointer-events-none absolute top-[653px] left-[866px] h-[22px] w-[17px]" aria-hidden="true">
      <path
        d="M5.500 1.500c0-1.300 2-1.300 2 0v6c0-1.200 2.500-1 2.500.3 0-1 2.500-.8 2.500.7 0-1 2.500-.6 2.500 1v6l-1.500 3v2.500H6.500V19L1.500 12c-.8-1.500.8-2.500 2-1.200l2 2z"
        fill="#f6f6f6"
        stroke="#0a1430"
        strokeWidth="1.200"
      />
      <path d="M7.500 8v4M10 8.500V12M12.500 9v3" stroke="#0a1430" />
    </svg>
  );
}

export default function App() {
  return (
    <div
      className={clsx(
        "relative flex min-h-screen flex-col overflow-hidden select-none",
        "bg-[linear-gradient(180deg,rgba(20,90,170,0.16)_0%,transparent_36%),linear-gradient(97deg,#00a2f8_0%,#00aafa_14%,#009cf2_34%,#0080e0_52%,#0064ce_70%,#044cbc_86%,#063cb0_100%)]",
        FONT,
      )}
    >
      <div className="flex-1">
        <DesktopIcons />
      </div>
      <IdmWindow />
      <Taskbar />
      <Watermarks />
      <HandCursor />
    </div>
  );
}
